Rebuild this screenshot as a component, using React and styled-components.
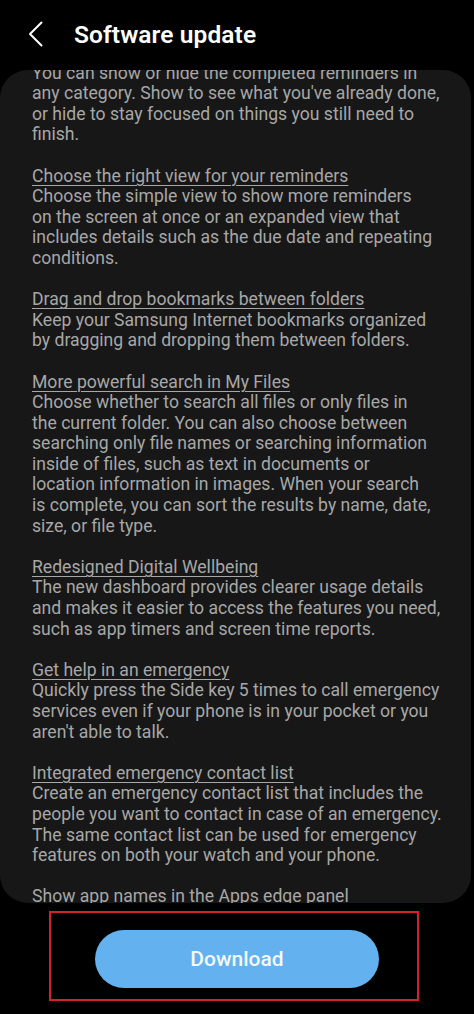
import React from 'react'
import styled, { createGlobalStyle } from 'styled-components'

const GlobalStyle = createGlobalStyle`
    html, body {
        margin: 0;
        padding: 0;
        background: #000;
    }
    body {
        font-family: Roboto, "Noto Sans", "Liberation Sans", sans-serif;
    }
`

const StyledPage = styled.div`
    display: flex;
    flex-direction: column;
    width: 474px;
    height: 1014px;
    background: #000;
    overflow: hidden;
`

const StyledHeader = styled.header`
    display: flex;
    align-items: center;
    height: 70px;
    flex-shrink: 0;
    padding-left: 24px;
    gap: 26px;
    box-sizing: border-box;
`

const StyledBack = styled.button`
    display: flex;
    align-items: center;
    justify-content: center;
    width: 24px;
    height: 30px;
    padding: 0;
    margin-top: -2px;
    border: none;
    background: none;
    cursor: pointer;
`

const StyledTitle = styled.h1`
    margin: 0;
    margin-top: -1px;
    font-size: 24.5px;
    font-weight: 600;
    color: #fff;
    letter-spacing: 0.1px;
`

const StyledCard = styled.div`
    height: 833px;
    flex-shrink: 0;
    margin-right: 3px;
    background: #171717;
    border-radius: 28px;
    overflow-y: auto;
    scrollbar-width: none;
    &::-webkit-scrollbar {
        display: none;
    }
`

const StyledNotes = styled.div`
    padding: 0 27px 40px 32px;
    color: #a7a7a7;
    font-size: 17.6px;
    line-height: 20.6px;
`

const StyledSection = styled.section`
    margin-bottom: 20.6px;
`

const StyledHeading = styled.div`
    text-decoration: underline;
    text-underline-offset: 3px;
    text-decoration-thickness: 1px;
`

const StyledBody = styled.p`
    margin: 0;
    white-space: pre-line;
`

const StyledFooter = styled.div`
    display: flex;
    flex: 1;
    padding: 8px 0 0 49px;
`

const StyledHighlight = styled.div`
    display: flex;
    align-items: center;
    justify-content: center;
    width: 370px;
    height: 90px;
    box-sizing: border-box;
    border: 2px solid #d3222c;
    padding: 5px 0 0 6px;
`

const StyledDownload = styled.button`
    width: 284px;
    height: 58px;
    border: none;
    border-radius: 29px;
    background: #63b1ee;
    color: #f4f8fc;
    font-family: Roboto, "Noto Sans", sans-serif;
    font-size: 21px;
    font-weight: 500;
    cursor: pointer;
`

const notes = [
    {
        title: 'Show or hide completed reminders',
        body: "You can show or hide the completed reminders in any category. Show to see what you've already done, or hide to stay focused on things you still need to finish.",
    },
    {
        title: 'Choose the right view for your reminders',
        body: 'Choose the simple view to show more reminders\non the screen at once or an expanded view that includes details such as the due date and repeating conditions.',
    },
    {
        title: 'Drag and drop bookmarks between folders',
        body: 'Keep your Samsung Internet bookmarks organized by dragging and dropping them between folders.',
    },
    {
        title: 'More powerful search in My Files',
        body: 'Choose whether to search all files or only files in\nthe current folder. You can also choose between\nsearching only file names or searching information\ninside of files, such as text in documents or\nlocation information in images. When your search\nis complete, you can sort the results by name, date,\nsize, or file type.',
    },
    {
        title: 'Redesigned Digital Wellbeing',
        body: 'The new dashboard provides clearer usage details and makes it easier to access the features you need, such as app timers and screen time reports.',
    },
    {
        title: 'Get help in an emergency',
        body: "Quickly press the Side key 5 times to call emergency services even if your phone is in your pocket or you aren't able to talk.",
    },
    {
        title: 'Integrated emergency contact list',
        body: 'Create an emergency contact list that includes the people you want to contact in case of an emergency. The same contact list can be used for emergency features on both your watch and your phone.',
    },
    {
        title: 'Show app names in the Apps edge panel',
        body: 'App names can now be shown below each app in the Apps edge panel.',
    },
]

const App = () => {
    const cardRef = React.useRef(null)

    React.useLayoutEffect(() => {
        if (cardRef.current) cardRef.current.scrollTop = 28
    }, [])

    return (
        <StyledPage>
            <GlobalStyle />
            <StyledHeader>
                <StyledBack aria-label='Back'>
                    <svg width='16' height='26' viewBox='0 0 16 26' fill='none'>
                        <path d='M13.5 1.5 L2 13 L13.5 24.5' stroke='#fff' strokeWidth='2' strokeLinecap='round' strokeLinejoin='round' />
                    </svg>
                </StyledBack>
                <StyledTitle>Software update</StyledTitle>
            </StyledHeader>
            <StyledCard ref={cardRef}>
                <StyledNotes>
                    {notes.map((note) => (
                        <StyledSection key={note.title}>
                            <StyledHeading>{note.title}</StyledHeading>
                            <StyledBody>{note.body}</StyledBody>
                        </StyledSection>
                    ))}
                </StyledNotes>
            </StyledCard>
            <StyledFooter>
                <StyledHighlight>
                    <StyledDownload>Download</StyledDownload>
                </StyledHighlight>
            </StyledFooter>
        </StyledPage>
    )
}

export default App
